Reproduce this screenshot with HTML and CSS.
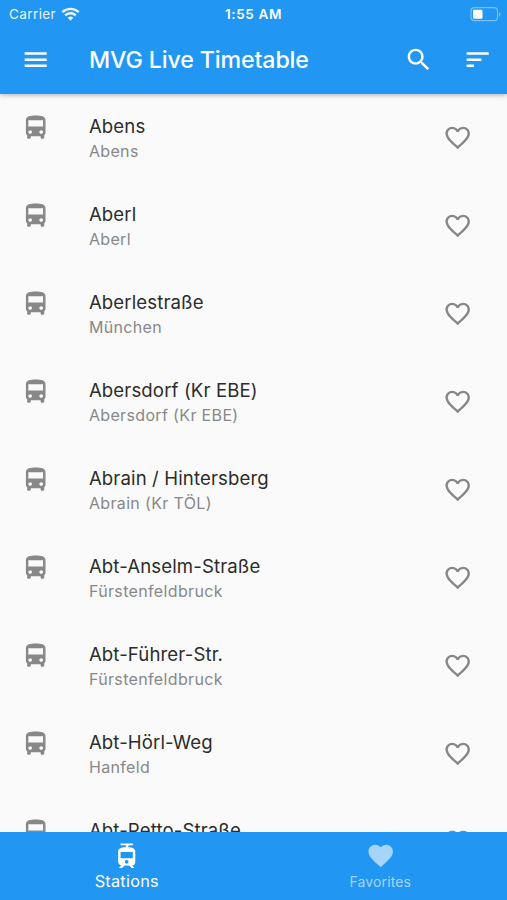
FILE: index.html
```
<!DOCTYPE html>
<html lang="en">
<head>
    <meta charset="UTF-8">
    <meta name="viewport" content="width=device-width, initial-scale=1.0">
    <title>MVG Live Timetable</title>
    <link rel="stylesheet" href="styles.css">
</head>
<body>
    <!-- shared icons -->
    <svg class="defs">
        <symbol id="bus" viewBox="0 0 24 24"><path d="M4 16c0 .88.39 1.67 1 2.22V20c0 .55.45 1 1 1h1c.55 0 1-.45 1-1v-1h8v1c0 .55.45 1 1 1h1c.55 0 1-.45 1-1v-1.78c.61-.55 1-1.34 1-2.22V6c0-3.5-3.58-4-8-4s-8 .5-8 4v10zm3.5 1c-.83 0-1.5-.67-1.5-1.5S6.67 14 7.5 14s1.5.67 1.5 1.5S8.33 17 7.5 17zm9 0c-.83 0-1.5-.67-1.5-1.5s.67-1.5 1.5-1.5 1.5.67 1.5 1.5-.67 1.5-1.5 1.5zm1.5-6H6V6h12v5z"/></symbol>
        <symbol id="heart" viewBox="0 0 24 24"><path d="M16.5 3c-1.74 0-3.41.81-4.5 2.09C10.91 3.81 9.24 3 7.5 3 4.42 3 2 5.42 2 8.5c0 3.78 3.4 6.86 8.55 11.54L12 21.35l1.45-1.32C18.6 15.36 22 12.28 22 8.5 22 5.42 19.58 3 16.5 3zm-4.4 15.55l-.1.1-.1-.1C7.14 14.24 4 11.39 4 8.5 4 6.5 5.5 5 7.5 5c1.54 0 3.04.99 3.57 2.36h1.87C13.46 5.99 14.96 5 16.5 5c2 0 3.5 1.5 3.5 3.5 0 2.89-3.14 5.74-7.9 10.05z"/></symbol>
    </svg>

    <header>
        <div class="status">
            <div class="carrier">Carrier
                <svg class="wifi" viewBox="0 0 19 14"><path d="M9.500 13.700L6.700 10.800a4.100 4.100 0 0 1 5.600 0z"/><path class="arc" d="M4.200 8.400a7.600 7.600 0 0 1 10.600 0M1.300 5.200a11.800 11.800 0 0 1 16.400 0"/></svg>
            </div>
            <div class="time">1:55 AM</div>
            <svg class="battery" viewBox="0 0 31 15"><rect class="case" x="1" y=".7" width="26.500" height="13" rx="3.500"/><rect x="3" y="2.700" width="9.500" height="9" rx="1.300"/><path class="tip" d="M29 5c2 .8 2 3.600 0 4.400z"/></svg>
        </div>
        <div class="toolbar">
            <svg class="icon menu" viewBox="0 0 24 24"><path d="M3 18h18v-2H3v2zm0-5h18v-2H3v2zm0-7v2h18V6H3z"/></svg>
            <h1>MVG Live Timetable</h1>
            <svg class="icon" viewBox="0 0 24 24"><path d="M15.500 14h-.79l-.28-.27C15.410 12.590 16 11.110 16 9.500 16 5.910 13.090 3 9.500 3S3 5.910 3 9.500 5.910 16 9.500 16c1.610 0 3.090-.59 4.230-1.570l.27.28v.79l5 4.990L20.490 19l-4.990-5zm-6 0C7.010 14 5 11.990 5 9.500S7.010 5 9.500 5 14 7.010 14 9.500 11.990 14 9.500 14z"/></svg>
            <svg class="icon sort" viewBox="0 0 24 24"><path d="M3 18h6v-2H3v2zM3 6v2h18V6H3zm0 7h12v-2H3v2z"/></svg>
        </div>
    </header>

    <ul class="stations">
        <li>
            <svg class="icon"><use href="#bus"/></svg>
            <div class="station"><div class="name">Abens</div><div class="place">Abens</div></div>
            <svg class="icon fav"><use href="#heart"/></svg>
        </li>
        <li>
            <svg class="icon"><use href="#bus"/></svg>
            <div class="station"><div class="name">Aberl</div><div class="place">Aberl</div></div>
            <svg class="icon fav"><use href="#heart"/></svg>
        </li>
        <li>
            <svg class="icon"><use href="#bus"/></svg>
            <div class="station"><div class="name">Aberlestraße</div><div class="place">München</div></div>
            <svg class="icon fav"><use href="#heart"/></svg>
        </li>
        <li>
            <svg class="icon"><use href="#bus"/></svg>
            <div class="station"><div class="name">Abersdorf (Kr EBE)</div><div class="place">Abersdorf (Kr EBE)</div></div>
            <svg class="icon fav"><use href="#heart"/></svg>
        </li>
        <li>
            <svg class="icon"><use href="#bus"/></svg>
            <div class="station"><div class="name">Abrain / Hintersberg</div><div class="place">Abrain (Kr TÖL)</div></div>
            <svg class="icon fav"><use href="#heart"/></svg>
        </li>
        <li>
            <svg class="icon"><use href="#bus"/></svg>
            <div class="station"><div class="name">Abt-Anselm-Straße</div><div class="place">Fürstenfeldbruck</div></div>
            <svg class="icon fav"><use href="#heart"/></svg>
        </li>
        <li>
            <svg class="icon"><use href="#bus"/></svg>
            <div class="station"><div class="name">Abt-Führer-Str.</div><div class="place">Fürstenfeldbruck</div></div>
            <svg class="icon fav"><use href="#heart"/></svg>
        </li>
        <li>
            <svg class="icon"><use href="#bus"/></svg>
            <div class="station"><div class="name">Abt-Hörl-Weg</div><div class="place">Hanfeld</div></div>
            <svg class="icon fav"><use href="#heart"/></svg>
        </li>
        <li>
            <svg class="icon"><use href="#bus"/></svg>
            <div class="station"><div class="name">Abt-Petto-Straße</div></div>
            <svg class="icon fav"><use href="#heart"/></svg>
        </li>
    </ul>

    <nav>
        <div class="tab active">
            <svg class="icon" viewBox="0 0 24 24"><path d="M19 16.940V8.500c0-2.790-2.610-3.400-6.010-3.490l.76-1.510H17V2H7v1.500h4.750l-.76 1.520C7.860 5.110 5 5.730 5 8.500v8.440c0 1.450 1.190 2.660 2.590 2.970L6 21.500v.5h2.230l2-2H14l2 2h2v-.5L16.500 20h-.08c1.690 0 2.580-1.370 2.580-3.060zm-7 1.560c-.83 0-1.500-.67-1.500-1.500s.67-1.500 1.500-1.500 1.500.67 1.500 1.500-.67 1.500-1.500 1.500zm5-4.500H7V9h10v5z"/></svg>
            <span>Stations</span>
        </div>
        <div class="tab">
            <svg class="icon" viewBox="0 0 24 24"><path d="M12 21.350l-1.450-1.320C5.400 15.360 2 12.280 2 8.500 2 5.420 4.420 3 7.500 3c1.740 0 3.410.81 4.500 2.090C13.090 3.810 14.760 3 16.500 3 19.580 3 22 5.420 22 8.500c0 3.780-3.400 6.860-8.550 11.540L12 21.350z"/></svg>
            <span>Favorites</span>
        </div>
    </nav>
</body>
</html>
```
FILE: styles.css
```
* {
    box-sizing: border-box;
}
body {
    margin: 0;
    height: 900px;
    display: flex;
    flex-direction: column;
    overflow: hidden;
    background-color: #fafafa;
    font-family: Inter, Roboto, sans-serif;
}
.defs {
    display: none;
}
.icon {
    width: 29.4px;
    height: 29.4px;
    flex: none;
    fill: currentColor;
}

/* top bar */
header {
    height: 94px;
    flex: none;
    background-color: #2196f3;
    color: white;
    box-shadow: 0 1px 5px rgba(0, 0, 0, 0.3);
    z-index: 1;
}
.status {
    display: grid;
    grid-template-columns: 1fr auto 1fr;
    align-items: center;
    height: 26px;
    padding: 2px 6px 0 9px;
    font-size: 13.5px;
}
.carrier {
    display: flex;
    align-items: center;
    gap: 5px;
    opacity: 0.9;
    letter-spacing: 0.4px;
}
.wifi {
    width: 19px;
    height: 14px;
    fill: white;
}
.wifi .arc {
    fill: none;
    stroke: white;
    stroke-width: 2.4;
}
.time {
    margin-right: 3px;
    font-weight: 600;
    font-size: 13.5px;
    letter-spacing: 0.6px;
}
.battery {
    width: 31px;
    height: 15px;
    justify-self: end;
    fill: white;
}
.battery .case {
    fill: none;
    stroke: rgba(255, 255, 255, 0.4);
    stroke-width: 1.2;
}
.battery .tip {
    fill: rgba(255, 255, 255, 0.4);
}
.toolbar {
    display: flex;
    align-items: center;
    height: 67px;
    padding: 0 15px 0 20.5px;
}
h1 {
    flex: 1;
    margin: 0 0 0 39px;
    font-size: 23.2px;
    font-weight: 500;
    letter-spacing: -0.12px;
}
.sort {
    margin-left: 29px;
}

/* station list */
.stations {
    flex: 1;
    min-height: 0;
    margin: 0;
    padding: 0;
    overflow: hidden;
    list-style: none;
    color: #888;
}
.stations li {
    display: flex;
    height: 88px;
    padding: 19px 34.5px 0 20.5px;
}
.station {
    flex: 1;
    padding-left: 39px;
}
.name {
    color: #2c2c2c;
    font-size: 18.6px;
    line-height: 26px;
    letter-spacing: 0.12px;
}
.place {
    font-size: 16px;
    line-height: 25px;
    letter-spacing: 0.35px;
}
.fav {
    margin-top: 9.5px;
}

/* bottom tabs */
nav {
    display: flex;
    flex: none;
    height: 68.5px;
    background-color: #2196f3;
}
.tab {
    flex: 1;
    display: flex;
    flex-direction: column;
    align-items: center;
    padding-top: 9px;
    color: #a6d5fa;
    font-size: 14px;
    line-height: 24px;
    letter-spacing: 0.1px;
}
.active {
    color: white;
    font-size: 16.3px;
    line-height: 22px;
    letter-spacing: 0.25px;
}
```
